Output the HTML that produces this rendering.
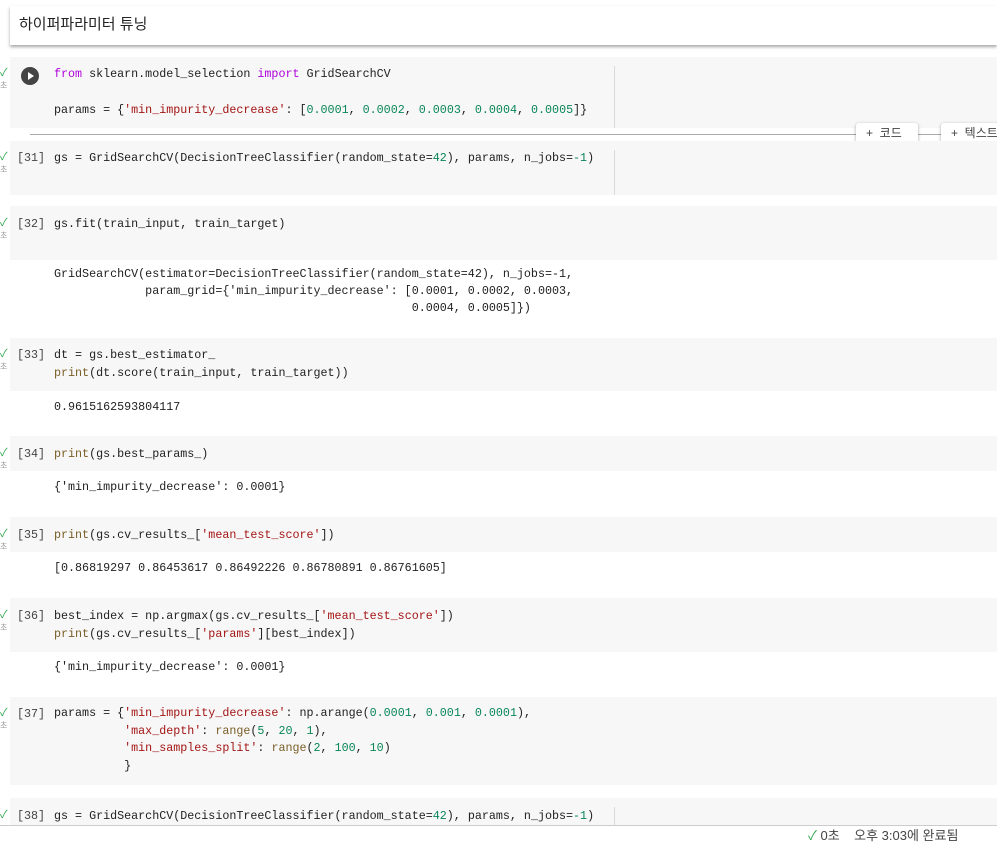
<!DOCTYPE html>
<html><head><meta charset="utf-8"><style>
body{margin:0;width:997px;height:835px;overflow:hidden;background:#fff;position:relative;font-family:"Liberation Sans","Noto Sans CJK KR",sans-serif}
.c{position:absolute;left:10px;right:0;background:#f7f7f7}
.vl{position:absolute;left:614px;width:1px;background:#dadada}
.l{position:absolute;left:54px;font-family:"Liberation Mono","Noto Sans CJK KR",monospace;font-size:11.7px;color:#212121;white-space:pre;line-height:18px}
.n{position:absolute;left:17px;font-family:"Liberation Mono",monospace;font-size:11.7px;color:#444;line-height:18px}
.k{color:#af00db}.s{color:#a31515}.d{color:#098658}.f{color:#795e26}
.ck{position:absolute;left:0;color:#34a853;font-size:11px;line-height:10px}
.ch{position:absolute;left:0;color:#999;font-size:8px}
.btn{position:absolute;top:123px;height:20px;background:#fff;border-radius:3px;box-shadow:0 1px 3px rgba(0,0,0,.35);font-size:12px;color:#444;line-height:20px;padding-left:10px;box-sizing:border-box}
</style></head><body>
<div style="position:absolute;left:10px;right:0;top:6px;height:39px;background:#fff;box-shadow:0 2px 3px rgba(0,0,0,.35);"></div>
<div style="position:absolute;left:19px;top:13px;font-size:15px;color:#222">하이퍼파라미터 튜닝</div>

<div class="c" style="top:57px;height:71px"></div><div class="vl" style="top:66px;height:62px"></div>
<div style="position:absolute;left:21px;top:67px;width:18px;height:18px;border-radius:50%;background:#444"></div>
<div style="position:absolute;left:28px;top:72px;width:0;height:0;border-left:6px solid #fff;border-top:4px solid transparent;border-bottom:4px solid transparent"></div>
<div class="l" style="top:65px"><span class="k">from</span> sklearn.model_selection <span class="k">import</span> GridSearchCV</div>
<div class="l" style="top:101px">params = {<span class="s">'min_impurity_decrease'</span>: [<span class="d">0.0001</span>, <span class="d">0.0002</span>, <span class="d">0.0003</span>, <span class="d">0.0004</span>, <span class="d">0.0005</span>]}</div>

<div style="position:absolute;left:30px;right:0;top:129px;height:10px;background:#fff"></div>
<div style="position:absolute;left:30px;right:0;top:134px;height:1px;background:#aaa"></div>
<div class="btn" style="left:856px;width:62px">+&nbsp;&nbsp;코드</div>
<div class="btn" style="left:941px;width:70px">+&nbsp;&nbsp;텍스트</div>

<div class="c" style="top:141px;height:54px"></div><div class="vl" style="top:150px;height:45px"></div>
<div class="n" style="top:149px">[31]</div>
<div class="l" style="top:149px">gs = GridSearchCV(DecisionTreeClassifier(random_state=<span class="d">42</span>), params, n_jobs=<span class="d">-1</span>)</div>

<div class="c" style="top:206px;height:54px"></div>
<div class="n" style="top:215px">[32]</div>
<div class="l" style="top:215px">gs.fit(train_input, train_target)</div>
<div class="l" style="top:266px;line-height:17px">GridSearchCV(estimator=DecisionTreeClassifier(random_state=42), n_jobs=-1,
             param_grid={'min_impurity_decrease': [0.0001, 0.0002, 0.0003,
                                                   0.0004, 0.0005]})</div>

<div class="c" style="top:338px;height:53px"></div>
<div class="n" style="top:346px">[33]</div>
<div class="l" style="top:346px">dt = gs.best_estimator_
<span class="f">print</span>(dt.score(train_input, train_target))</div>
<div class="l" style="top:398px">0.9615162593804117</div>

<div class="c" style="top:436px;height:35px"></div>
<div class="n" style="top:445px">[34]</div>
<div class="l" style="top:445px"><span class="f">print</span>(gs.best_params_)</div>
<div class="l" style="top:478px">{'min_impurity_decrease': 0.0001}</div>

<div class="c" style="top:517px;height:35px"></div>
<div class="n" style="top:526px">[35]</div>
<div class="l" style="top:526px"><span class="f">print</span>(gs.cv_results_[<span class="s">'mean_test_score'</span>])</div>
<div class="l" style="top:559px">[0.86819297 0.86453617 0.86492226 0.86780891 0.86761605]</div>

<div class="c" style="top:598px;height:54px"></div>
<div class="n" style="top:607px">[36]</div>
<div class="l" style="top:607px">best_index = np.argmax(gs.cv_results_[<span class="s">'mean_test_score'</span>])
<span class="f">print</span>(gs.cv_results_[<span class="s">'params'</span>][best_index])</div>
<div class="l" style="top:658px">{'min_impurity_decrease': 0.0001}</div>

<div class="c" style="top:697px;height:88px"></div>
<div class="n" style="top:705px">[37]</div>
<div class="l" style="top:705px;line-height:17.6px">params = {<span class="s">'min_impurity_decrease'</span>: np.arange(<span class="d">0.0001</span>, <span class="d">0.001</span>, <span class="d">0.0001</span>),
          <span class="s">'max_depth'</span>: <span class="f">range</span>(<span class="d">5</span>, <span class="d">20</span>, <span class="d">1</span>),
          <span class="s">'min_samples_split'</span>: <span class="f">range</span>(<span class="d">2</span>, <span class="d">100</span>, <span class="d">10</span>)
          }</div>

<div class="c" style="top:798px;height:28px"></div><div class="vl" style="top:807px;height:19px"></div>
<div class="n" style="top:807px">[38]</div>
<div class="l" style="top:807px">gs = GridSearchCV(DecisionTreeClassifier(random_state=<span class="d">42</span>), params, n_jobs=<span class="d">-1</span>)</div>

<div style="position:absolute;left:0;right:0;top:825px;height:10px;background:#fff;border-top:1px solid #ccc"></div>
<div style="position:absolute;left:808px;top:829px;font-size:13px;color:#444;line-height:13px;white-space:nowrap"><span style="color:#34a853">✓</span> 0초&nbsp;&nbsp;&nbsp; 오후 3:03에 완료됨</div>

<div class="ck" style="top:68px">✓</div><div class="ch" style="top:80px">초</div>
<div class="ck" style="top:152px">✓</div><div class="ch" style="top:164px">초</div>
<div class="ck" style="top:218px">✓</div><div class="ch" style="top:230px">초</div>
<div class="ck" style="top:349px">✓</div><div class="ch" style="top:361px">초</div>
<div class="ck" style="top:448px">✓</div><div class="ch" style="top:460px">초</div>
<div class="ck" style="top:529px">✓</div><div class="ch" style="top:541px">초</div>
<div class="ck" style="top:610px">✓</div><div class="ch" style="top:622px">초</div>
<div class="ck" style="top:708px">✓</div><div class="ch" style="top:720px">초</div>
<div class="ck" style="top:810px">✓</div>
</body></html>
